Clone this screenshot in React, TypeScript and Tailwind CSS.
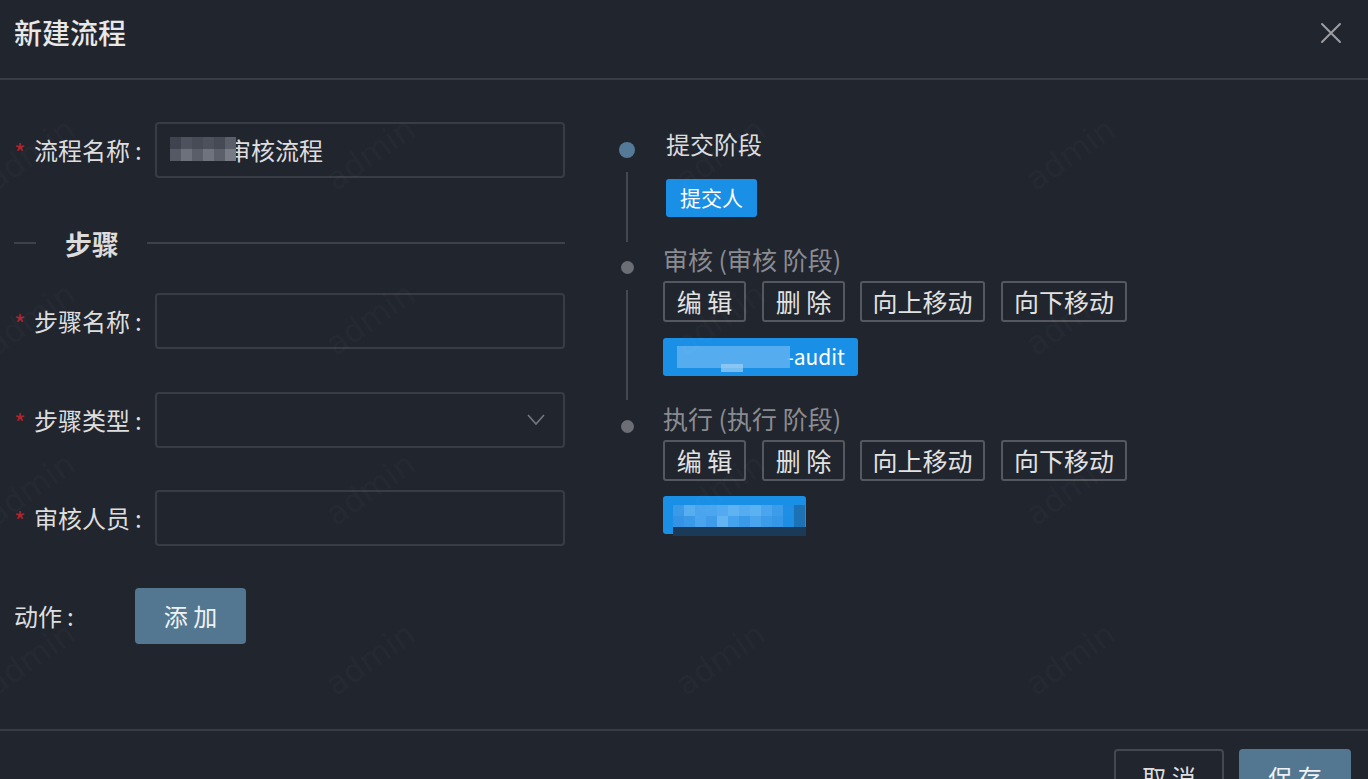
import React from "react";

const FONT = "font-['Noto_Sans_CJK_SC','Noto_Sans',sans-serif]";

function Label({ text }: { text: string }) {
  return (
    <div className="w-[141px] shrink-0 flex items-center whitespace-nowrap text-[24px] leading-none text-[#dedede]">
      <span className="w-[20px] text-[#b0262e] text-[25px] mt-[4px]">*</span>
      <span>{text}</span>
      <span className="ml-[5px]">:</span>
    </div>
  );
}

function Input({ children }: { children?: React.ReactNode }) {
  return (
    <div className="relative flex-1 h-[56px] rounded-[4px] border-2 border-[#393c44] flex items-center px-[14px] text-[24px] text-[#dedede]">
      {children}
    </div>
  );
}

function ActionButtons() {
  const btns: { t: string; cls: string }[] = [
    { t: "编 辑", cls: "w-[83px]" },
    { t: "删 除", cls: "w-[83px] ml-[16px]" },
    { t: "向上移动", cls: "w-[125px] ml-[15px]" },
    { t: "向下移动", cls: "w-[126px] ml-[16px]" },
  ];
  return (
    <div className="flex mt-[5px]">
      {btns.map((b) => (
        <div
          key={b.t}
          className={`${b.cls} h-[41px] border-2 border-[#55585f] rounded-[3px] flex items-center justify-center text-[25px] leading-none text-[#e2e2e2] whitespace-pre`}
        >
          {b.t}
        </div>
      ))}
    </div>
  );
}

function Pixels({ cols, w, h, colors }: { cols: number; w: number; h: number; colors: string[] }) {
  return (
    <div className="grid" style={{ gridTemplateColumns: `repeat(${cols}, ${w}px)` }}>
      {colors.map((c, i) => (
        <div key={i} style={{ background: c, height: h }} />
      ))}
    </div>
  );
}

export default function App() {
  const wm: { x: number; y: number }[] = [];
  for (const y of [0, 165, 335, 505, 680]) {
    for (const x of [-20, 320, 670, 1020, 1370]) wm.push({ x, y });
  }
  return (
    <div className={`relative w-[1368px] h-[779px] overflow-hidden bg-[#21252e] ${FONT}`}>
      {/* header */}
      <div className="h-[80px] border-b-2 border-[#383c45] flex items-start justify-between pl-[14px] pr-[26px] pt-[13px]">
        <div className="text-[28px] leading-[38px] font-medium text-[#e8e8e8]">新建流程</div>
        <svg width="22" height="22" viewBox="0 0 22 22" className="mt-[9px]">
          <path d="M2 2 L20 20 M20 2 L2 20" stroke="#9c9ea3" strokeWidth="2" strokeLinecap="round" />
        </svg>
      </div>

      {/* body */}
      <div className="h-[649px] flex pl-[14px]">
        {/* left form */}
        <div className="w-[551px] pt-[42px] flex flex-col">
          <div className="flex items-center">
            <Label text="流程名称" />
            <Input>
              <span className="ml-[56px]">审核流程</span>
              <div className="absolute left-[13px] top-[13px]">
                <Pixels
                  cols={6}
                  w={11}
                  h={12}
                  colors={[
                    "#3f4350", "#4e525d", "#474b56", "#4d515c", "#464a55", "#5a5e68",
                    "#555964", "#6d717b", "#5a5e69", "#6f737d", "#5b5f6a", "#777b85",
                  ]}
                />
              </div>
            </Input>
          </div>

          {/* divider */}
          <div className="mt-[49px] h-[32px] flex items-center">
            <div className="w-[22px] h-[2px] bg-[#3d4149]" />
            <div className="ml-[29px] mr-[28px] text-[27px] font-bold text-[#dcdcdc] leading-none">步骤</div>
            <div className="flex-1 h-[2px] bg-[#3d4149]" />
          </div>

          <div className="mt-[34px] flex items-center">
            <Label text="步骤名称" />
            <Input />
          </div>
          <div className="mt-[43px] flex items-center">
            <Label text="步骤类型" />
            <Input>
              <div className="flex-1" />
              <svg width="18" height="12" viewBox="0 0 18 12" className="mr-[4px]">
                <path d="M1 1 L9 10 L17 1" fill="none" stroke="#75787f" strokeWidth="1.6" />
              </svg>
            </Input>
          </div>
          <div className="mt-[42px] flex items-center">
            <Label text="审核人员" />
            <Input />
          </div>

          <div className="mt-[42px] flex items-center">
            <div className="w-[121px] text-[24px] text-[#dedede] leading-none">
              动作<span className="ml-[5px]">:</span>
            </div>
            <div className="w-[111px] h-[56px] rounded-[4px] bg-[#537790] flex items-center justify-center text-[24px] text-[#eef2f5] whitespace-pre">
              添 加
            </div>
          </div>
        </div>

        {/* right timeline */}
        <div className="ml-[53px] pt-[48px] flex flex-col">
          {/* item 1 */}
          <div className="flex">
            <div className="w-[18px] flex flex-col items-center">
              <div className="mt-[14px] w-[16px] h-[16px] rounded-full bg-[#557a98]" />
              <div className="mt-[14px] mb-[2px] flex-1 w-[2px] bg-[#444851]" />
            </div>
            <div className="ml-[30px] pb-[27px]">
              <div className="h-[32px] flex items-center text-[24px] text-[#dcdcdc]">提交阶段</div>
              <div className="mt-[19px] inline-flex h-[38px] px-[14px] rounded-[3px] bg-[#1a8fe6] items-center text-[21px] text-white">
                提交人
              </div>
            </div>
          </div>
          {/* item 2 */}
          <div className="flex">
            <div className="w-[18px] flex flex-col items-center">
              <div className="mt-[17px] w-[13px] h-[13px] rounded-full bg-[#6b6e75]" />
              <div className="mt-[16px] mb-[3px] flex-1 w-[2px] bg-[#444851]" />
            </div>
            <div className="ml-[27px] pb-[27px]">
              <div className="h-[32px] flex items-center text-[25px] text-[#8a8c92]">审核 (审核 阶段)</div>
              <ActionButtons />
              <div className="mt-[16px] relative inline-flex h-[38px] w-[195px] rounded-[3px] bg-[#1a8fe6] items-center justify-end pr-[13px] text-[21px] text-white">
                -audit
                <div className="absolute left-[14px] top-[8px] w-[113px] h-[22px] bg-[#5cb0f0] opacity-90" />
                <div className="absolute left-[58px] top-[26px] w-[22px] h-[8px] bg-[#9fd0f6] opacity-70" />
              </div>
            </div>
          </div>
          {/* item 3 */}
          <div className="flex">
            <div className="w-[18px] flex flex-col items-center">
              <div className="mt-[17px] w-[13px] h-[13px] rounded-full bg-[#6b6e75]" />
            </div>
            <div className="ml-[27px]">
              <div className="h-[32px] flex items-center text-[25px] text-[#8a8c92]">执行 (执行 阶段)</div>
              <ActionButtons />
              <div className="mt-[15px] relative w-[143px] h-[42px]">
                <div className="absolute left-0 top-0 w-[143px] h-[38px] rounded-[3px] bg-[#1a8fe6]" />
                <div className="absolute left-[10px] top-[9px]">
                  <Pixels
                    cols={12}
                    w={11}
                    h={11}
                    colors={[
                      "#3b9ae8", "#56adf0", "#4aa4ee", "#4ba6ee", "#53aaf0", "#5fb3f2", "#55acf0", "#5cb1f2", "#4aa4ee", "#3d9cea", "#1f8fe6", "#1c72b4",
                      "#3493e4", "#3a98e8", "#4ba5ee", "#3e9ceb", "#62b5f2", "#45a2ed", "#3a99e8", "#4aa4ee", "#3d9cea", "#3597e8", "#1e8ee5", "#1c72b4",
                    ]}
                  />
                  <div className="h-[9px] w-[133px] bg-[#1b3a58]" />
                </div>
              </div>
            </div>
          </div>
        </div>
      </div>

      {/* footer */}
      <div className="border-t-2 border-[#383c45] pt-[18px] pr-[17px] flex justify-end gap-[15px]">
        <div className="w-[110px] h-[56px] rounded-[4px] border-2 border-[#45484f] flex items-center justify-center text-[24px] text-[#dedede] whitespace-pre">
          取 消
        </div>
        <div className="w-[112px] h-[56px] rounded-[4px] bg-[#537790] flex items-center justify-center text-[24px] text-[#eef2f5] whitespace-pre">
          保 存
        </div>
      </div>

      {/* watermark overlay */}
      <div className="pointer-events-none absolute inset-0">
        {wm.map((p, i) => (
          <div
            key={i}
            className="absolute text-[32px] text-white opacity-[0.014] -rotate-[35deg] font-['DejaVu_Sans',sans-serif]"
            style={{ left: p.x, top: p.y + 130 }}
          >
            admin
          </div>
        ))}
      </div>
    </div>
  );
}
